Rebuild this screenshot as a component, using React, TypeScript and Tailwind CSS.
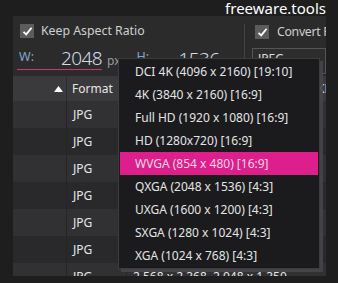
import React from 'react';

const presets = [
  'DCI 4K (4096 x 2160) [19:10]',
  '4K (3840 x 2160) [16:9]',
  'Full HD (1920 x 1080) [16:9]',
  'HD (1280x720) [16:9]',
  'WVGA (854 x 480) [16:9]',
  'QXGA (2048 x 1536) [4:3]',
  'UXGA (1600 x 1200) [4:3]',
  'SXGA (1280 x 1024) [4:3]',
  'XGA (1024 x 768) [4:3]',
];

const Check = () => (
  <div className="w-[14px] h-[14px] bg-[#5c5c5c] flex items-center justify-center shrink-0">
    <svg width="11" height="11" viewBox="0 0 11 11">
      <path d="M1.5 5.8 L4.2 8.4 L9.6 1.8" fill="none" stroke="#fff" strokeWidth="1.8" />
    </svg>
  </div>
);

const rows = [0, 1, 2, 3, 4, 5, 6];

const App: React.FC = () => {
  return (
    <div
      className="w-[338px] h-[283px] bg-[#1e1e1e] relative overflow-hidden"
      style={{ fontFamily: '"Noto Sans", "Open Sans", sans-serif' }}
    >
      {/* Title */}
      <div className="h-[16px] flex justify-end pr-[12px] overflow-hidden">
        <span className="text-[15px] leading-[18px] text-white -mt-[1px] whitespace-nowrap">freeware.tools</span>
      </div>

      {/* Panel */}
      <div className="ml-[13px] w-[313px] h-[260px] bg-[#2b2b2b] flex flex-col overflow-hidden">
        {/* Options + size */}
        <div className="h-[60px] flex shrink-0">
          <div className="w-[231px] shrink-0 flex flex-col">
            <div className="flex items-center gap-[7px] pl-[7px] mt-[8px] h-[14px]">
              <Check />
              <span className="text-[12.3px] leading-[16px] text-[#cfcfcf] whitespace-nowrap">Keep Aspect Ratio</span>
            </div>
            <div className="flex items-end h-[23px] mt-[9px]">
              <div className="w-[85px] ml-[4px] h-[23px] border-b border-[#c8367a] flex justify-between">
                <span className="text-[12.5px] leading-[16px] text-[#7fa6cc] pl-[2px] mt-[2px]">W:</span>
                <span className="self-end text-[19px] leading-[22px] tracking-[-0.6px] text-[#d2dae6] font-light">2048</span>
              </div>
              <span className="text-[12px] leading-[14px] text-[#9a9a9a] ml-[5px] mb-[2px]">px</span>
              <div className="w-[85px] ml-[14px] h-[23px] flex justify-between">
                <span className="text-[12.5px] leading-[16px] text-[#7fa6cc] pl-[2px] mt-[2px]">H:</span>
                <span className="self-end text-[19px] leading-[22px] tracking-[-0.6px] text-[#d2dae6] font-light">1536</span>
              </div>
            </div>
          </div>
          <div className="w-px h-[52px] mt-[8px] bg-[#444] shrink-0" />
          <div className="flex-1 flex flex-col overflow-hidden">
            <div className="flex items-center gap-[8px] pl-[10px] mt-[9px] h-[14px] whitespace-nowrap">
              <Check />
              <span className="text-[12.3px] leading-[16px] tracking-[-0.3px] text-[#cfcfcf]">Convert Format</span>
            </div>
            <div className="ml-[7px] mt-[9px] h-[26px] border border-[#555] bg-[#2d2d2d] pl-[5px] text-[12px] text-[#ddd] leading-[20px]">
              JPEG
            </div>
          </div>
        </div>

        {/* Table */}
        <div className="flex flex-col text-[12px] text-[#e6e6e6]">
          <div className="h-[25px] bg-[#3a3a3d] flex items-center">
            <div className="w-[54px] h-full flex items-center justify-end pr-[3px] border-r border-[#2b2b2b]">
              <svg width="9" height="6" viewBox="0 0 9 6">
                <path d="M0 6 L4.5 0 L9 6 Z" fill="#fff" />
              </svg>
            </div>
            <div className="pl-[5px] w-[60px] h-full flex items-center border-r border-[#2b2b2b]">Format</div>
            <div className="w-[80px] h-full border-r border-[#2b2b2b]" />
            <div className="w-[80px] h-full border-r border-[#2b2b2b]" />
            <div className="flex-1 pl-[30px] overflow-hidden whitespace-nowrap">KB</div>
          </div>
          {rows.map((r) => (
            <div
              key={r}
              className={`h-[27px] flex items-center shrink-0 ${r % 2 === 0 ? 'bg-[#313134]' : 'bg-[#29292c]'}`}
            >
              <div className="w-[54px] h-full border-r border-[#252527]" />
              <div className="pl-[6px] w-[60px] h-full flex items-center border-r border-[#252527]">JPG</div>
              <div className="pl-[6px] w-[80px] h-full flex items-center border-r border-[#252527] whitespace-nowrap">
                2 568 x 2 368
              </div>
              <div className="pl-[6px] w-[80px] h-full flex items-center border-r border-[#252527] whitespace-nowrap">
                2 048 x 1 350
              </div>
              <div className="flex-1 h-full" />
            </div>
          ))}
        </div>
      </div>

      {/* Dropdown */}
      <div className="absolute left-[118px] top-[58px] w-[202px] bg-[#1b1b1d] border border-[#3c3c3c] p-[1px] shadow-[3px_3px_0_rgba(70,70,74,0.9)]">
        {presets.map((p, i) => (
          <div
            key={p}
            className={`h-[23px] flex items-center pl-[15px] text-[12px] whitespace-nowrap ${
              i === 4 ? 'bg-[#dc1f8a] text-[#f4d8e8]' : 'text-[#e4e4e4]'
            }`}
          >
            {p}
          </div>
        ))}
      </div>
    </div>
  );
};

export default App;
